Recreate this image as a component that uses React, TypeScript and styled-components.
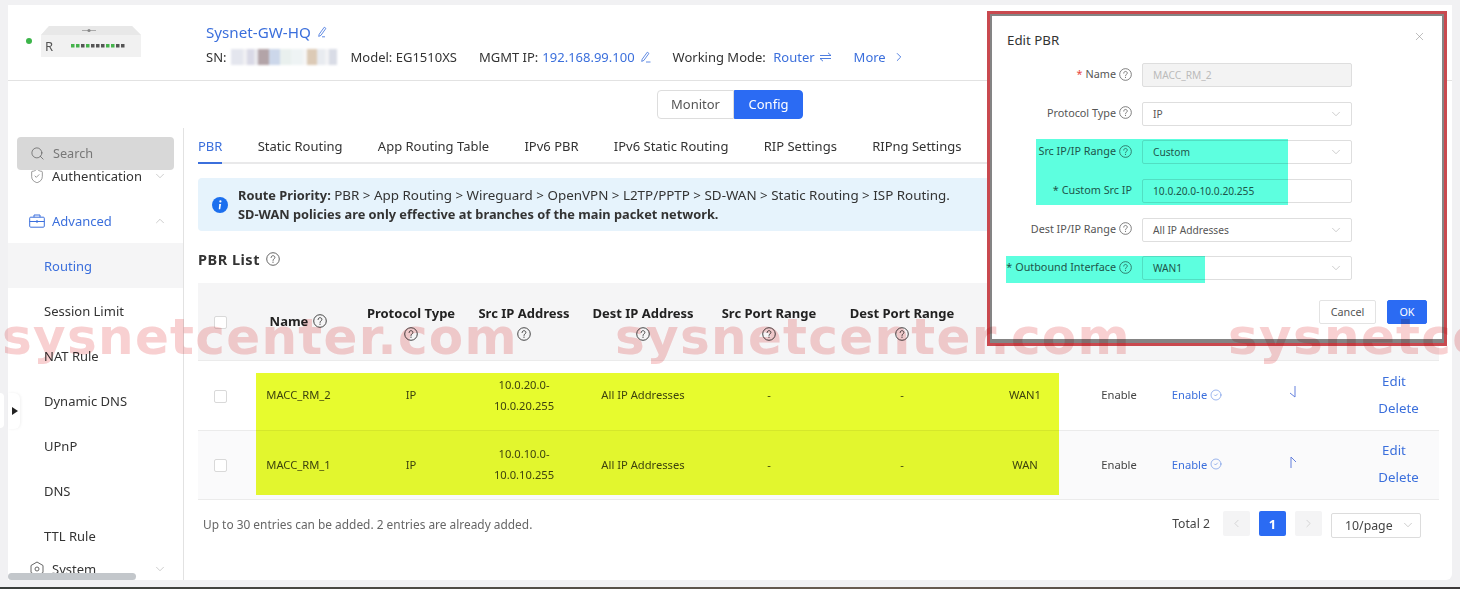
import React from "react";
import styled, { createGlobalStyle } from "styled-components";
import { Search, ShieldCheck, ChevronDown, ChevronUp, ChevronRight, ChevronLeft, X, CircleCheck } from "lucide-react";

const font = `"Noto Sans", "Liberation Sans", sans-serif`;
const blue = "#3b6fdc";
const primary = "#2b6bf3";

const Global = createGlobalStyle`
  html, body { margin: 0; padding: 0; background: #f1f1f3; }
  body { font-family: ${font}; color: #333; width: 1460px; height: 589px; overflow: hidden; }
  * { box-sizing: border-box; }
`;

const Page = styled.div`
  position: relative;
  width: 1460px;
  height: 589px;
  padding: 5px 8px 0;
  overflow: hidden;
  display: flex;
  flex-direction: column;
`;
const DarkStrip = styled.div`
  position: absolute;
  left: 0; right: 0; bottom: 0;
  height: 2px;
  background: linear-gradient(90deg, #3a3f3c, #555048 40%, #6b5e52 60%, #3c3a3a);
`;
const Panel = styled.div`
  width: 1444px;
  height: 575px;
  background: #fff;
  border-bottom-right-radius: 6px;
  display: flex;
  flex-direction: column;
  overflow: hidden;
`;
const Header = styled.header`
  height: 76px;
  flex: none;
  border-bottom: 1px solid #e2e2e2;
  display: flex;
  align-items: flex-start;
`;
const DeviceWrap = styled.div`
  width: 198px;
  flex: none;
  display: flex;
  align-items: center;
  gap: 9px;
  padding: 20px 0 0 18px;
`;
const StatusDot = styled.span`
  width: 6px;
  height: 6px;
  border-radius: 50%;
  background: #3cb54a;
  flex: none;
`;
const DeviceInfo = styled.div`
  display: flex;
  flex-direction: column;
  padding-top: 17px;
  gap: 5px;
`;
const DeviceName = styled.div`
  display: flex;
  align-items: center;
  gap: 5px;
  height: 20px;
  font-size: 15.2px;
  color: ${blue};
`;
const InfoRow = styled.div`
  display: flex;
  align-items: center;
  height: 20px;
  font-size: 13px;
  color: #333;
  white-space: nowrap;
`;
const InfoItem = styled.span<{ $gap?: number }>`
  display: inline-flex;
  align-items: center;
  gap: 4px;
  margin-left: ${(p) => p.$gap ?? 0}px;
`;
const BlueText = styled.span`
  color: ${blue};
`;
const MoreLink = styled(InfoItem)`
  gap: 6px;
`;
const Mosaic = styled.span`
  display: inline-flex;
  width: 106px;
  height: 16px;
  margin-left: 4px;
  filter: blur(1px);
`;
const MosaicCell = styled.span<{ $c: string; $w: number }>`
  display: block;
  width: ${(p) => p.$w}px;
  background: ${(p) => p.$c};
`;
const ModeSwitch = styled.div`
  height: 47px;
  flex: none;
  display: flex;
  justify-content: center;
  padding-top: 9px;
`;
const ModeButton = styled.div<{ $active?: boolean }>`
  height: 29px;
  line-height: 27px;
  font-size: 13px;
  color: ${(p) => (p.$active ? "#fff" : "#555")};
  background: ${(p) => (p.$active ? primary : "#fff")};
  border: 1px solid ${(p) => (p.$active ? primary : "#ddd")};
  border-radius: ${(p) => (p.$active ? "0 4px 4px 0" : "4px 0 0 4px")};
  width: ${(p) => (p.$active ? 69 : 77)}px;
  text-align: center;
`;
const Body = styled.div`
  flex: 1;
  min-height: 0;
  display: flex;
`;
const Sidebar = styled.aside`
  position: relative;
  width: 176px;
  flex: none;
  border-right: 1px solid #e2e2e2;
  overflow: hidden;
  padding-top: 25px;
`;
const SearchBox = styled.div`
  position: absolute;
  left: 9px;
  top: 9px;
  width: 157px;
  height: 33px;
  background: #d8d8d8;
  border-radius: 4px;
  display: flex;
  align-items: center;
  gap: 8px;
  padding: 0 0 1px 13px;
  font-size: 12.7px;
  color: #777;
`;
const MenuItem = styled.div<{ $active?: boolean; $sub?: boolean; $accent?: boolean; $short?: boolean }>`
  height: ${(p) => (p.$short ? 22 : 45)}px;
  display: flex;
  align-items: center;
  font-size: 13px;
  white-space: nowrap;
  padding-left: ${(p) => (p.$sub ? 36 : 21)}px;
  padding-right: 16px;
  background: ${(p) => (p.$active ? "#f5f5f6" : "transparent")};
  color: ${(p) => (p.$active || p.$accent ? blue : "#333")};
  gap: 7px;
`;
const MenuCaret = styled.span`
  margin-left: auto;
  display: inline-flex;
  color: #aaa;
`;
const ScrollThumb = styled.div`
  position: absolute;
  left: 0;
  bottom: 0;
  width: 128px;
  height: 7px;
  border-radius: 4px;
  background: #c3c7cb;
`;
const Content = styled.main`
  flex: 1;
  min-width: 0;
  padding: 0 13px 0 14px;
`;
const Tabs = styled.nav`
  height: 36px;
  display: flex;
  gap: 35.3px;
  border-bottom: 2px solid #e9e9ea;
`;
const Tab = styled.div<{ $active?: boolean }>`
  height: 36px;
  line-height: 36px;
  font-size: 13px;
  white-space: nowrap;
  color: ${(p) => (p.$active ? blue : "#333")};
  border-bottom: 2px solid ${(p) => (p.$active ? blue : "transparent")};
`;
const Banner = styled.div`
  margin-top: 14px;
  height: 53px;
  border-radius: 4px;
  background: #e6f3fc;
  display: flex;
  align-items: center;
  padding-left: 14px;
  gap: 10px;
`;
const BannerText = styled.div`
  font-size: 13.4px;
  line-height: 19px;
  color: #333;
  white-space: nowrap;
`;
const BannerStrong = styled.b`
  font-size: 12.8px;
`;
const Title = styled.div`
  margin-top: 16px;
  height: 24px;
  display: flex;
  align-items: center;
  gap: 6px;
  font-size: 14.5px;
  font-weight: 700;
  letter-spacing: 0.5px;
  color: #333;
`;
const Table = styled.table`
  margin-top: 12px;
  width: 1241px;
  border-collapse: collapse;
  table-layout: fixed;
`;
const Th = styled.th<{ $peek?: boolean }>`
  height: 77px;
  padding: ${(p) => (p.$peek ? "48px 0 0" : "0 4px")};
  background: #f5f5f6;
  border-bottom: 1px solid #ebebeb;
  font-size: 13px;
  line-height: 22px;
  font-weight: 700;
  color: #222;
  text-align: center;
  vertical-align: ${(p) => (p.$peek ? "top" : "middle")};
`;
const HeadInner = styled.div<{ $inline?: boolean }>`
  display: flex;
  flex-direction: ${(p) => (p.$inline ? "row" : "column")};
  align-items: center;
  justify-content: center;
  gap: ${(p) => (p.$inline ? 5 : 3)}px;
`;
const HeadLabel = styled.span`
  white-space: nowrap;
  line-height: 22px;
`;
const Tr = styled.tr<{ $alt?: boolean }>`
  background: ${(p) => (p.$alt ? "#fafafb" : "#fff")};
`;
const Td = styled.td<{ $h: number }>`
  height: ${(p) => p.$h}px;
  padding: 0 0 1px;
  border-bottom: 1px solid #ebebeb;
  font-size: 11.2px;
  line-height: 21px;
  color: #444;
  text-align: center;
`;
const Checkbox = styled.span`
  display: inline-block;
  width: 13px;
  height: 13px;
  border: 1px solid #d9d9d9;
  border-radius: 2px;
  background: #fff;
  vertical-align: middle;
`;
const EnableLink = styled.span`
  display: inline-flex;
  align-items: center;
  gap: 3px;
  color: ${blue};
`;
const ActionLink = styled.div`
  font-size: 13.3px;
  line-height: 27px;
  color: ${blue};
`;
const ActionEdit = styled(ActionLink)`
  padding-right: 2px;
`;
const ActionDelete = styled(ActionLink)`
  padding-left: 7px;
`;
const Footer = styled.div`
  display: flex;
  align-items: center;
  height: 48px;
  padding-left: 5px;
  font-size: 11.9px;
  color: #666;
`;
const Pager = styled.div`
  margin-left: auto;
  margin-right: 18px;
  display: flex;
  align-items: center;
  gap: 9px;
`;
const Total = styled.span`
  font-size: 12.2px;
  color: #444;
  margin-right: 4px;
`;
const PageBtn = styled.span<{ $active?: boolean }>`
  width: 27px;
  height: 25px;
  border-radius: 2px;
  display: inline-flex;
  align-items: center;
  justify-content: center;
  font-size: 13px;
  font-weight: 700;
  background: ${(p) => (p.$active ? primary : "#f4f4f5")};
  color: ${(p) => (p.$active ? "#fff" : "#bbb")};
`;
const PageSize = styled.span`
  width: 90px;
  height: 25px;
  margin-top: 3px;
  border: 1px solid #dcdcdc;
  border-radius: 2px;
  display: inline-flex;
  align-items: center;
  justify-content: space-between;
  padding: 0 5px 0 13px;
  font-size: 12.3px;
  color: #444;
`;

/* dialog */
const Frame = styled.div`
  position: absolute;
  left: 987px;
  top: 11px;
  width: 460px;
  height: 335px;
  border: 3px solid #c9494f;
  background: #848484;
  padding: 2px 2px 4px;
`;
const Dialog = styled.div`
  position: relative;
  height: 100%;
  background: #fff;
  padding: 14px 15px 0 0;
`;
const DialogTitle = styled.div`
  padding-left: 15px;
  font-size: 13.3px;
  line-height: 20px;
  color: #333;
`;
const Close = styled.span`
  position: absolute;
  right: 16px;
  top: 14px;
  display: inline-flex;
  color: #888;
`;
const Form = styled.div`
  margin-top: 13px;
  display: flex;
  flex-direction: column;
  gap: 14.7px;
`;
const FormRow = styled.div`
  display: grid;
  grid-template-columns: 140px 210px;
  column-gap: 10px;
  align-items: center;
  height: 24px;
`;
const FormLabel = styled.label`
  display: flex;
  align-items: center;
  justify-content: flex-end;
  gap: 3px;
  font-size: 10.8px;
  line-height: 22px;
  padding-bottom: 2px;
  color: #555;
  white-space: nowrap;
`;
const Star = styled.span<{ $red?: boolean }>`
  color: ${(p) => (p.$red ? "#e8483f" : "#555")};
`;
const Field = styled.div<{ $disabled?: boolean }>`
  height: 24px;
  border: 1px solid #dedede;
  border-radius: 2px;
  background: ${(p) => (p.$disabled ? "#f3f3f3" : "#fff")};
  color: ${(p) => (p.$disabled ? "#bbb" : "#555")};
  display: flex;
  align-items: center;
  justify-content: space-between;
  padding: 0 8px 0 10px;
  font-size: 10.2px;
`;
const DialogFooter = styled.div`
  margin-top: 20px;
  display: flex;
  justify-content: flex-end;
  gap: 11px;
`;
const DlgButton = styled.div<{ $primary?: boolean }>`
  height: 24px;
  line-height: 22px;
  width: ${(p) => (p.$primary ? 40 : 57)}px;
  text-align: center;
  font-size: 10.8px;
  border-radius: 2px;
  border: 1px solid ${(p) => (p.$primary ? primary : "#e3e3e3")};
  background: ${(p) => (p.$primary ? primary : "#fff")};
  color: ${(p) => (p.$primary ? "#fff" : "#555")};
`;

/* overlays */
const Highlight = styled.div<{ $c: string; $x: number; $y: number; $w: number; $h: number }>`
  position: absolute;
  left: ${(p) => p.$x}px;
  top: ${(p) => p.$y}px;
  width: ${(p) => p.$w}px;
  height: ${(p) => p.$h}px;
  background: ${(p) => p.$c};
  mix-blend-mode: multiply;
`;
const Watermark = styled.div`
  position: absolute;
  left: 2px;
  top: 303px;
  width: 1458px;
  overflow: hidden;
  display: flex;
  gap: 100px;
  white-space: nowrap;
  font-family: "DejaVu Sans", sans-serif;
  font-weight: 700;
  font-size: 50px;
  letter-spacing: 1.3px;
  line-height: 68px;
  color: #f8d0d1;
  mix-blend-mode: multiply;
  pointer-events: none;
`;
const WatermarkWord = styled.span`
  flex: none;
  width: 513px;
`;
const CollapseStub = styled.div`
  position: absolute;
  left: 0;
  top: 393px;
  width: 4px;
  height: 35px;
  background: #fff;
  border-radius: 0 4px 4px 0;
`;
const CollapseHandle = styled.div`
  position: absolute;
  left: 8px;
  top: 393px;
  width: 12px;
  height: 36px;
  background: #fff;
  border-radius: 0 6px 6px 0;
  box-shadow: 1px 0 3px rgba(0, 0, 0, 0.06);
  display: flex;
  align-items: center;
  justify-content: center;
  padding-left: 1px;
`;

const Help = ({ size = 14, color = "#333" }: { size?: number; color?: string }) => (
  <svg width={size} height={size} viewBox="0 0 14 14" fill="none" style={{ flex: "none" }}>
    <circle cx="7" cy="7" r="6.3" stroke={color} strokeWidth="0.9" />
    <path d="M5.1 5.5c0-1.1.9-1.8 1.9-1.8s1.9.7 1.9 1.7c0 1.5-1.9 1.5-1.9 3" stroke={color} strokeWidth="0.9" strokeLinecap="round" />
    <circle cx="7" cy="10.2" r="0.6" fill={color} />
  </svg>
);
const EditIcon = ({ underline }: { underline?: boolean }) => (
  <svg width="12" height="12" viewBox="0 0 12 12" fill="none" stroke={blue} strokeWidth="0.8">
    <path d="M3.2 8.2 8.3 1.2l1.6 1.2-5 7-2.2 1z" />
    {underline && <path d="M7 11h4.5" />}
    {!underline && <path d="M6 10.8h3" />}
  </svg>
);
const Device = () => (
  <svg width="100" height="32" viewBox="0 0 100 32" style={{ flex: "none" }}>
    <path d="M0 10 8 1h83l9 9v22H0z" fill="#f1f1f1" />
    <path d="M8 1h83l9 9H0z" fill="#e8e8e8" />
    <path d="M41 5.5h14" stroke="#aaa" strokeWidth="1" />
    <circle cx="48" cy="5.5" r="1.6" fill="#888" />
    <text x="4" y="26" fontFamily="Noto Sans, sans-serif" fontSize="13" fill="#555">R</text>
    {["#45b34c", "#45b34c", "#555", "#45b34c", "#555", "#555", "#555", "#45b34c", "#45b34c", "#555", "#555"].map((c, i) => (
      <rect key={i} x={30 + i * 5} y="19" width="3.5" height="3.5" fill={c} />
    ))}
  </svg>
);
const Briefcase = () => (
  <svg width="16" height="14" viewBox="0 0 16 14" fill="none" stroke={blue} strokeWidth="1">
    <rect x="0.7" y="3.2" width="14.6" height="10" rx="1" />
    <path d="M5 3.2V1h6v2.2M.7 7.5h14.6M8 6v3" />
  </svg>
);
const SystemIcon = () => (
  <svg width="16" height="16" viewBox="0 0 16 16" fill="none" stroke="#666" strokeWidth="1">
    <path d="M8 1l6 3.5v7L8 15l-6-3.5v-7z" />
    <circle cx="8" cy="8" r="2" />
  </svg>
);
const InfoIcon = () => (
  <svg width="16" height="16" viewBox="0 0 16 16" style={{ flex: "none" }}>
    <circle cx="8" cy="8" r="8" fill="#1c6fee" />
    <circle cx="8.4" cy="4.4" r="1.1" fill="#fff" />
    <path d="M7.2 7h1.9l-.9 5.2H6.8z" fill="#fff" />
  </svg>
);
const OrderIcon = ({ up }: { up?: boolean }) => (
  <svg width="12" height="14" viewBox="0 0 12 14" fill="none" stroke="#6480dd" strokeWidth="1">
    {up ? <path d="M4 13V2l5 5" /> : <path d="M8 1v11L3 8" />}
  </svg>
);
const Harpoons = () => (
  <svg width="13" height="10" viewBox="0 0 13 10" fill="none" stroke={blue} strokeWidth="0.9">
    <path d="M1 3.5h11L9 .8M12 6.5H1L4 9.2" />
  </svg>
);
const Chevron = () => <ChevronDown size={14} strokeWidth={1} color="#aaa" />;

const mosaic: [string, number][] = [
  ["#e4e6ee", 12], ["#f0f0f3", 4], ["#d9d9e6", 7], ["#e9e9ee", 4], ["#b3a4a8", 11], ["#ccd7ea", 11],
  ["#e9f0ee", 11], ["#eef3f4", 12], ["#f6f6f6", 4], ["#dccab6", 10], ["#e8ebf0", 8], ["#f2f3f5", 4], ["#d9dce6", 8],
];

const cols = [44, 113, 112, 114, 124, 128, 138, 108, 80, 76, 116, 88];
const rows = [
  { name: "MACC_RM_2", a: "10.0.20.0-", b: "10.0.20.255", out: "WAN1", h: 70, up: false },
  { name: "MACC_RM_1", a: "10.0.10.0-", b: "10.0.10.255", out: "WAN", h: 69, up: true },
];

export default function App() {
  return (
    <>
      <Global />
      <Page>
        <Panel>
          <Header>
            <DeviceWrap>
              <StatusDot />
              <Device />
            </DeviceWrap>
            <DeviceInfo>
              <DeviceName>
                Sysnet-GW-HQ <EditIcon />
              </DeviceName>
              <InfoRow>
                SN:
                <Mosaic>
                  {mosaic.map(([c, w], i) => (
                    <MosaicCell key={i} $c={c} $w={w} />
                  ))}
                </Mosaic>
                <InfoItem $gap={14}>Model: EG1510XS</InfoItem>
                <InfoItem $gap={22}>
                  MGMT IP: <BlueText>192.168.99.100</BlueText>
                  <EditIcon underline />
                </InfoItem>
                <InfoItem $gap={22}>
                  Working Mode:&nbsp; <BlueText>Router</BlueText>
                  <Harpoons />
                </InfoItem>
                <MoreLink $gap={22}>
                  <BlueText>More</BlueText>
                  <ChevronRight size={14} color={blue} strokeWidth={1.5} />
                </MoreLink>
              </InfoRow>
            </DeviceInfo>
          </Header>
          <ModeSwitch>
            <ModeButton>Monitor</ModeButton>
            <ModeButton $active>Config</ModeButton>
          </ModeSwitch>
          <Body>
            <Sidebar>
              <MenuItem>
                <ShieldCheck size={16} strokeWidth={1} color="#666" />
                Authentication
                <MenuCaret><Chevron /></MenuCaret>
              </MenuItem>
              <MenuItem $accent>
                <Briefcase />
                Advanced
                <MenuCaret><ChevronUp size={14} strokeWidth={1} color="#aaa" /></MenuCaret>
              </MenuItem>
              <MenuItem $sub $active>Routing</MenuItem>
              <MenuItem $sub>Session Limit</MenuItem>
              <MenuItem $sub>NAT Rule</MenuItem>
              <MenuItem $sub>Dynamic DNS</MenuItem>
              <MenuItem $sub>UPnP</MenuItem>
              <MenuItem $sub>DNS</MenuItem>
              <MenuItem $sub>TTL Rule</MenuItem>
              <MenuItem $short>
                <SystemIcon />
                System
                <MenuCaret><Chevron /></MenuCaret>
              </MenuItem>
              <SearchBox>
                <Search size={15} strokeWidth={1.1} color="#555" />
                Search
              </SearchBox>
              <ScrollThumb />
            </Sidebar>
            <Content>
              <Tabs>
                <Tab $active>PBR</Tab>
                <Tab>Static Routing</Tab>
                <Tab>App Routing Table</Tab>
                <Tab>IPv6 PBR</Tab>
                <Tab>IPv6 Static Routing</Tab>
                <Tab>RIP Settings</Tab>
                <Tab>RIPng Settings</Tab>
              </Tabs>
              <Banner>
                <InfoIcon />
                <BannerText>
                  <BannerStrong>Route Priority:</BannerStrong> PBR &gt; App Routing &gt; Wireguard &gt; OpenVPN &gt; L2TP/PPTP &gt; SD-WAN &gt; Static Routing &gt; ISP Routing.
                  <br />
                  <BannerStrong>SD-WAN policies are only effective at branches of the main packet network.</BannerStrong>
                </BannerText>
              </Banner>
              <Title>
                PBR List <Help size={14} color="#555" />
              </Title>
              <Table>
                <colgroup>
                  {cols.map((w, i) => (
                    <col key={i} width={w} />
                  ))}
                </colgroup>
                <thead>
                  <tr>
                    <Th><Checkbox /></Th>
                    <Th><HeadInner $inline><HeadLabel>Name</HeadLabel><Help /></HeadInner></Th>
                    <Th><HeadInner><HeadLabel>Protocol Type</HeadLabel><Help /></HeadInner></Th>
                    <Th><HeadInner><HeadLabel>Src IP Address</HeadLabel><Help /></HeadInner></Th>
                    <Th><HeadInner><HeadLabel>Dest IP Address</HeadLabel><Help /></HeadInner></Th>
                    <Th><HeadInner><HeadLabel>Src Port Range</HeadLabel><Help /></HeadInner></Th>
                    <Th><HeadInner><HeadLabel>Dest Port Range</HeadLabel><Help /></HeadInner></Th>
                    <Th />
                    <Th $peek><HeadInner><Help /></HeadInner></Th>
                    <Th />
                    <Th />
                    <Th />
                  </tr>
                </thead>
                <tbody>
                  {rows.map((r, i) => (
                    <Tr key={r.name} $alt={i === 1}>
                      <Td $h={r.h}><Checkbox /></Td>
                      <Td $h={r.h}>{r.name}</Td>
                      <Td $h={r.h}>IP</Td>
                      <Td $h={r.h}>{r.a}<br />{r.b}</Td>
                      <Td $h={r.h}>All IP Addresses</Td>
                      <Td $h={r.h}>-</Td>
                      <Td $h={r.h}>-</Td>
                      <Td $h={r.h}>{r.out}</Td>
                      <Td $h={r.h}>Enable</Td>
                      <Td $h={r.h}>
                        <EnableLink>Enable <CircleCheck size={12} strokeWidth={1} /></EnableLink>
                      </Td>
                      <Td $h={r.h}><OrderIcon up={r.up} /></Td>
                      <Td $h={r.h}>
                        <ActionEdit>Edit</ActionEdit>
                        <ActionDelete>Delete</ActionDelete>
                      </Td>
                    </Tr>
                  ))}
                </tbody>
              </Table>
              <Footer>
                Up to 30 entries can be added. 2 entries are already added.
                <Pager>
                  <Total>Total 2</Total>
                  <PageBtn><ChevronLeft size={13} strokeWidth={1} /></PageBtn>
                  <PageBtn $active>1</PageBtn>
                  <PageBtn><ChevronRight size={13} strokeWidth={1} /></PageBtn>
                  <PageSize>10/page <Chevron /></PageSize>
                </Pager>
              </Footer>
            </Content>
          </Body>
        </Panel>
        <DarkStrip />
        <CollapseStub />
        <CollapseHandle>
          <svg width="6" height="8" viewBox="0 0 6 8"><path d="M0 0l6 4-6 4z" fill="#222" /></svg>
        </CollapseHandle>
        <Highlight $c="#e7fb2e" $x={256} $y={373} $w={803} $h={122} />
        <Frame>
          <Dialog>
            <DialogTitle>Edit PBR</DialogTitle>
            <Close><X size={13} strokeWidth={1} /></Close>
            <Form>
              <FormRow>
                <FormLabel><Star $red>*</Star> Name <Help size={13} color="#666" /></FormLabel>
                <Field $disabled>MACC_RM_2</Field>
              </FormRow>
              <FormRow>
                <FormLabel>Protocol Type <Help size={13} color="#666" /></FormLabel>
                <Field>IP <Chevron /></Field>
              </FormRow>
              <FormRow>
                <FormLabel>Src IP/IP Range <Help size={13} color="#666" /></FormLabel>
                <Field>Custom <Chevron /></Field>
              </FormRow>
              <FormRow>
                <FormLabel><Star>*</Star> Custom Src IP</FormLabel>
                <Field>10.0.20.0-10.0.20.255</Field>
              </FormRow>
              <FormRow>
                <FormLabel>Dest IP/IP Range <Help size={13} color="#666" /></FormLabel>
                <Field>All IP Addresses <Chevron /></Field>
              </FormRow>
              <FormRow>
                <FormLabel><Star>*</Star> Outbound Interface <Help size={13} color="#666" /></FormLabel>
                <Field>WAN1 <Chevron /></Field>
              </FormRow>
            </Form>
            <DialogFooter>
              <DlgButton>Cancel</DlgButton>
              <DlgButton $primary>OK</DlgButton>
            </DialogFooter>
          </Dialog>
        </Frame>
        <Highlight $c="#5dffdf" $x={1036} $y={139} $w={252} $h={66} />
        <Highlight $c="#5dffdf" $x={1006} $y={256} $w={199} $h={27} />
        <Watermark>
          <WatermarkWord>sysnetcenter.com</WatermarkWord>
          <WatermarkWord>sysnetcenter.com</WatermarkWord>
          <WatermarkWord>sysnetcenter.com</WatermarkWord>
        </Watermark>
      </Page>
    </>
  );
}
